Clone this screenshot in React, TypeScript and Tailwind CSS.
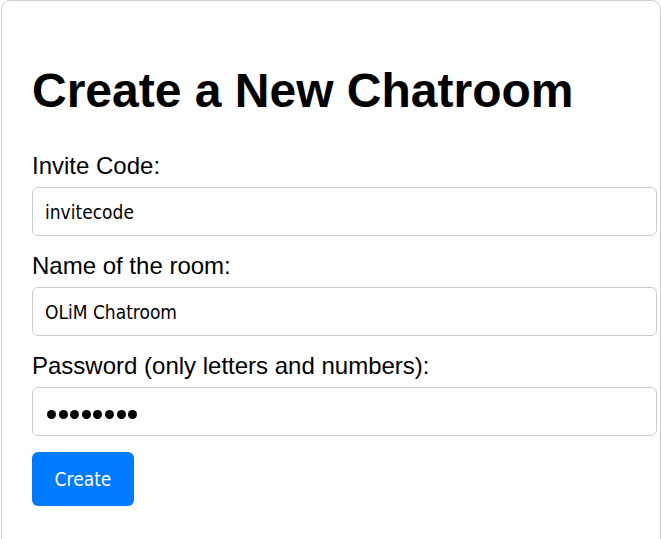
import React from "react";

const inputFont = { fontFamily: '"DejaVu Sans Condensed", "DejaVu Sans", sans-serif' };

function Field({ label, children }: { label: string; children: React.ReactNode }) {
  return (
    <div className="flex flex-col">
      <label className="text-[24px] leading-[28px] text-black mb-[7px]">{label}</label>
      {children}
    </div>
  );
}

export default function App() {
  return (
    <div className="bg-white min-h-[539px] overflow-hidden" style={{ fontFamily: '"Liberation Sans", Arial, sans-serif' }}>
      <div className="ml-px w-[660px] h-[560px] border border-[#cfcfcf] rounded-t-[9px] pt-[30px] pl-[30px]">
        <h1 className="mt-[32px] mb-[34px] text-[48px] leading-[55px] font-bold text-black">
          Create a New Chatroom
        </h1>
        <div className="flex flex-col gap-[16px]">
          <Field label="Invite Code:">
            <input
              readOnly
              value="invitecode"
              className="w-[625px] h-[49px] border border-[#cccccc] rounded-[6px] px-[12px] text-[19px] text-black outline-none"
              style={inputFont}
            />
          </Field>
          <Field label="Name of the room:">
            <input
              readOnly
              value="OLiM Chatroom"
              className="w-[625px] h-[49px] border border-[#cccccc] rounded-[6px] px-[12px] text-[19px] text-black outline-none"
              style={inputFont}
            />
          </Field>
          <Field label="Password (only letters and numbers):">
            <div className="w-[625px] h-[49px] border border-[#cccccc] rounded-[6px] px-[14px] pt-[22px] flex items-start gap-[2.6px]">
              {Array.from({ length: 8 }).map((_, i) => (
                <span key={i} className="block w-[9px] h-[9px] rounded-full bg-black" />
              ))}
            </div>
          </Field>
          <button
            className="w-[102px] h-[54px] rounded-[6px] bg-[#007bff] text-white text-[19px] flex items-center justify-center"
            style={inputFont}
          >
            Create
          </button>
        </div>
      </div>
    </div>
  );
}
